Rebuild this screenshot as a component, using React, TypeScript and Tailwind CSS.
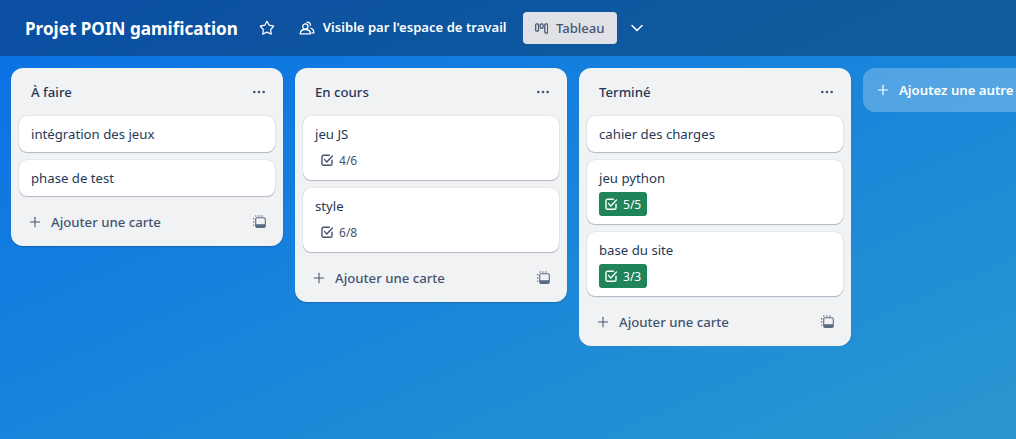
import { Plus, Star, Ellipsis, ChevronDown } from "lucide-react";

type Card = { title: string; done?: number; total?: number };
type List = { name: string; cards: Card[] };

const lists: List[] = [
  { name: "À faire", cards: [{ title: "intégration des jeux" }, { title: "phase de test" }] },
  { name: "En cours", cards: [{ title: "jeu JS", done: 4, total: 6 }, { title: "style", done: 6, total: 8 }] },
  {
    name: "Terminé",
    cards: [
      { title: "cahier des charges" },
      { title: "jeu python", done: 5, total: 5 },
      { title: "base du site", done: 3, total: 3 },
    ],
  },
];

function TemplateIcon() {
  return (
    <svg width="14" height="14" viewBox="0 0 14 14" fill="none" stroke="#5b6a85" strokeWidth="1.1">
      <rect x="2.7" y="2.7" width="9.6" height="9.8" rx="1.5" />
      <path d="M0.7 3v1.6M0.7 6.2v1.6M0.7 9.4v1.4M2 1h1.6M5 1h1.6M8 1h1.6" />
      <path d="M3 9.2h9v3H3z" fill="#5b6a85" stroke="none" />
    </svg>
  );
}

function BoardIcon() {
  return (
    <svg width="14" height="14" viewBox="0 0 14 14" fill="none" stroke="#44546f" strokeWidth="1.3">
      <rect x="0.7" y="2.7" width="3" height="7.6" rx="1" />
      <rect x="5.5" y="2.7" width="3" height="4.6" rx="1" />
      <rect x="10.3" y="2.7" width="3" height="9.6" rx="1" />
    </svg>
  );
}

function PeopleIcon() {
  return (
    <svg width="16" height="16" viewBox="0 0 16 16" fill="none" stroke="white" strokeWidth="1.3">
      <circle cx="6.3" cy="6.5" r="2.6" />
      <path d="M1.2 13.8c0-2.8 2-4.3 5.1-4.3s5.1 1.5 5.1 4.3z" />
      <path d="M7.6 2.6a2.6 2.6 0 0 1 3.6 3.4M11.4 8.2c2.1.5 3.4 2 3.4 4.6h-2.4" />
    </svg>
  );
}

function CheckIcon() {
  return (
    <svg width="14" height="14" viewBox="0 0 14 14" fill="none" stroke="currentColor" strokeWidth="1.4">
      <path d="M12 6.8v4.1a1.4 1.4 0 0 1-1.4 1.4H3.4A1.4 1.4 0 0 1 2 10.9V3.7a1.4 1.4 0 0 1 1.4-1.4h6.4" />
      <path d="M4.6 6.6l2.2 2.4 5.6-6" strokeLinecap="round" strokeLinejoin="round" />
    </svg>
  );
}

function CardItem({ card }: { card: Card }) {
  const complete = card.total !== undefined && card.done === card.total;
  return (
    <div className="rounded-lg bg-white px-3 pt-2 pb-2 shadow-[0_1px_1px_#091e4240,0_0_1px_#091e424f]">
      <div className="text-[13.2px] leading-5 text-[#253858]">{card.title}</div>
      {card.total !== undefined && (
        <div className="mt-1 flex">
          <div
            className={
              complete
                ? "flex h-6 items-center gap-[5px] rounded-[3px] bg-[#1f845a] pl-[5px] pr-1.5 text-white"
                : "flex h-6 items-center gap-[5px] pl-[5px] pr-1.5 text-[#44546f]"
            }
          >
            <CheckIcon />
            <span className="pt-[2px] text-[12px]">
              {card.done}/{card.total}
            </span>
          </div>
        </div>
      )}
    </div>
  );
}

function ListColumn({ list }: { list: List }) {
  return (
    <div className="w-[272px] shrink-0 rounded-xl bg-[#f1f2f4] pb-2 shadow-[0_1px_1px_#091e4240]">
      <div className="flex h-12 items-center justify-between pl-5 pr-4">
        <span className="pt-[2px] text-[13.2px] font-medium text-[#253858]">{list.name}</span>
        <Ellipsis size={16} className="text-[#44546f]" />
      </div>
      <div className="flex flex-col gap-2 px-2">
        {list.cards.map((card) => (
          <CardItem key={card.title} card={card} />
        ))}
      </div>
      <div className="mt-[10px] flex h-8 items-center justify-between px-4">
        <div className="flex items-center gap-2 text-[13.2px] font-medium text-[#44546f]">
          <Plus size={16} strokeWidth={1.6} />
          <span className="pt-[2px]">Ajouter une carte</span>
        </div>
        <TemplateIcon />
      </div>
    </div>
  );
}

export default function App() {
  return (
    <div className="flex h-[439px] w-[1016px] flex-col overflow-hidden bg-gradient-to-br from-[#0c6fe6] to-[#2a97cf] font-['Noto_Sans','Open_Sans',sans-serif]">
      <header className="flex h-14 shrink-0 items-center bg-[#0b1f3f]/40 pl-[25px] text-white">
        <h1 className="pt-[2px] text-[17.1px] font-bold">Projet POIN gamification</h1>
        <Star size={16} strokeWidth={1.8} className="ml-[21px]" />
        <span className="ml-[24px]">
          <PeopleIcon />
        </span>
        <span className="ml-[8px] text-[13.1px] font-semibold">Visible par l'espace de travail</span>
        <div className="ml-4 flex h-8 w-[94px] items-center gap-2 rounded-[4px] bg-[#dfe1e6] px-3 text-[13.1px] font-medium text-[#44546f]">
          <BoardIcon />
          <span className="pt-[2px]">Tableau</span>
        </div>
        <ChevronDown size={20} strokeWidth={1.8} className="ml-[10px]" />
      </header>
      <main className="flex items-start gap-3 overflow-hidden pl-[11px] pt-3">
        {lists.map((list) => (
          <ListColumn key={list.name} list={list} />
        ))}
        <div className="flex h-11 w-[272px] shrink-0 items-center gap-2 rounded-xl bg-white/25 px-3 text-[13.2px] font-semibold text-white">
          <Plus size={16} strokeWidth={1.8} />
          <span className="pt-[2px]">Ajoutez une autre</span>
        </div>
      </main>
    </div>
  );
}
